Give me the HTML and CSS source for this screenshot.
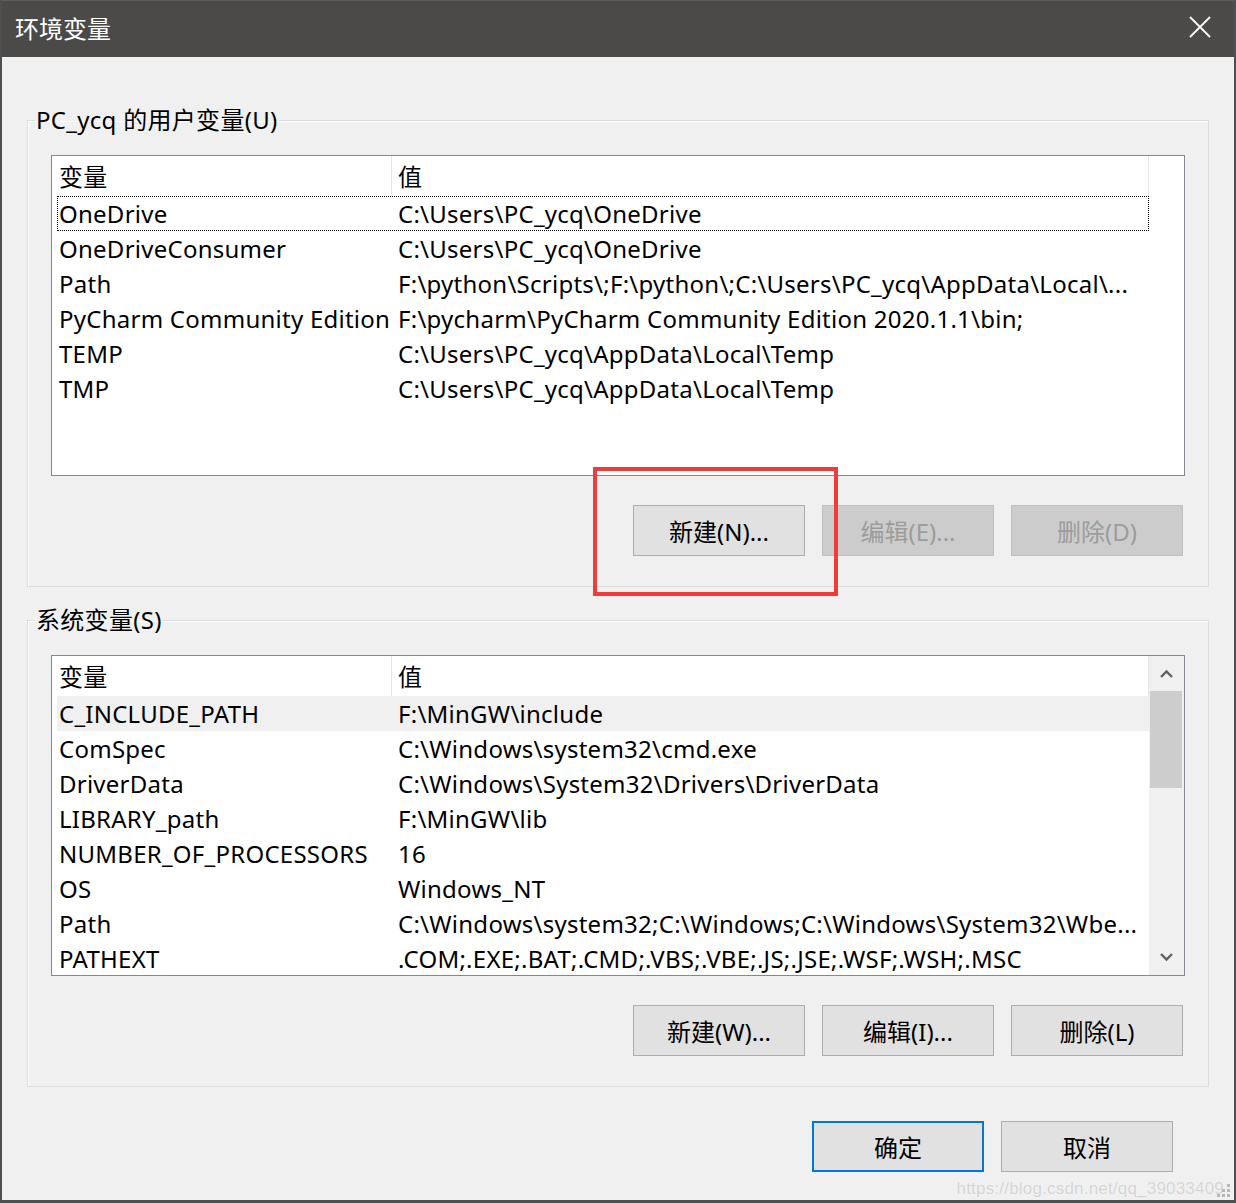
FILE: index.html
```html
<!DOCTYPE html>
<html lang="zh-CN">

<head>
	<meta charset="utf-8">
	<title>环境变量</title>
	<link rel="stylesheet" href="styles.css">
</head>

<body>
	<div class="window">
		<div class="titlebar">
			<span class="title">环境变量</span>
			<svg class="close" width="24" height="24" viewBox="0 0 24 24">
				<path d="M2 2 L22 22 M22 2 L2 22" stroke="#fff" stroke-width="1.8" fill="none"/>
			</svg>
		</div>

		<div class="content">
			<fieldset class="group">
				<legend>PC_ycq 的用户变量(U)</legend>
				<div class="list">
					<div class="list-main">
						<div class="list-head">
							<div class="head-name">变量</div>
							<div class="head-value">值</div>
						</div>
						<div class="row focus"><span class="name">OneDrive</span><span class="value">C:\Users\PC_ycq\OneDrive</span></div>
						<div class="row"><span class="name">OneDriveConsumer</span><span class="value">C:\Users\PC_ycq\OneDrive</span></div>
						<div class="row"><span class="name">Path</span><span class="value">F:\python\Scripts\;F:\python\;C:\Users\PC_ycq\AppData\Local\...</span></div>
						<div class="row"><span class="name">PyCharm Community Edition</span><span class="value">F:\pycharm\PyCharm Community Edition 2020.1.1\bin;</span></div>
						<div class="row"><span class="name">TEMP</span><span class="value">C:\Users\PC_ycq\AppData\Local\Temp</span></div>
						<div class="row"><span class="name">TMP</span><span class="value">C:\Users\PC_ycq\AppData\Local\Temp</span></div>
					</div>
				</div>
				<div class="buttons">
					<button class="btn">新建(N)...</button>
					<button class="btn" disabled>编辑(E)...</button>
					<button class="btn" disabled>删除(D)</button>
				</div>
				<div class="marker"></div>
			</fieldset>

			<fieldset class="group">
				<legend>系统变量(S)</legend>
				<div class="list">
					<div class="list-main">
						<div class="list-head">
							<div class="head-name">变量</div>
							<div class="head-value">值</div>
						</div>
						<div class="row selected"><span class="name">C_INCLUDE_PATH</span><span class="value">F:\MinGW\include</span></div>
						<div class="row"><span class="name">ComSpec</span><span class="value">C:\Windows\system32\cmd.exe</span></div>
						<div class="row"><span class="name">DriverData</span><span class="value">C:\Windows\System32\Drivers\DriverData</span></div>
						<div class="row"><span class="name">LIBRARY_path</span><span class="value">F:\MinGW\lib</span></div>
						<div class="row"><span class="name">NUMBER_OF_PROCESSORS</span><span class="value">16</span></div>
						<div class="row"><span class="name">OS</span><span class="value">Windows_NT</span></div>
						<div class="row"><span class="name">Path</span><span class="value">C:\Windows\system32;C:\Windows;C:\Windows\System32\Wbe...</span></div>
						<div class="row"><span class="name">PATHEXT</span><span class="value">.COM;.EXE;.BAT;.CMD;.VBS;.VBE;.JS;.JSE;.WSF;.WSH;.MSC</span></div>
					</div>
					<div class="scrollbar">
						<svg class="arrow" width="35" height="35" viewBox="0 0 35 35">
							<path d="M12 21 L17.5 15.5 L23 21" stroke="#606060" stroke-width="2.4" fill="none"/>
						</svg>
						<div class="thumb"></div>
						<div class="track"></div>
						<svg class="arrow" width="35" height="35" viewBox="0 0 35 35">
							<path d="M12 14 L17.5 19.5 L23 14" stroke="#606060" stroke-width="2.4" fill="none"/>
						</svg>
					</div>
				</div>
				<div class="buttons">
					<button class="btn">新建(W)...</button>
					<button class="btn">编辑(I)...</button>
					<button class="btn">删除(L)</button>
				</div>
			</fieldset>

			<div class="dialog-buttons">
				<button class="btn default">确定</button>
				<button class="btn">取消</button>
			</div>
		</div>

		<div class="watermark">https://blog.csdn.net/qq_39033409</div>
		<svg class="grip" width="16" height="16" viewBox="0 0 16 16">
			<rect x="11" y="1" width="3" height="3" fill="#b8b8b8"/>
			<rect x="6" y="6" width="3" height="3" fill="#b8b8b8"/>
			<rect x="11" y="6" width="3" height="3" fill="#b8b8b8"/>
			<rect x="1" y="11" width="3" height="3" fill="#b8b8b8"/>
			<rect x="6" y="11" width="3" height="3" fill="#b8b8b8"/>
			<rect x="11" y="11" width="3" height="3" fill="#b8b8b8"/>
		</svg>
	</div>
</body>

</html>
```

FILE: styles.css
```css
html, body {
	margin: 0;
	padding: 0;
}
body {
	background-color: #f0f0f0;
	font-family: "Noto Sans", "Noto Sans CJK SC", sans-serif;
	font-size: 24px;
	color: #000;
}
.window {
	position: relative;
	width: 1236px;
	height: 1203px;
	box-sizing: border-box;
	border: 2px solid #4f4f4f;
	border-top: 1px solid #5c5c5c;
	border-bottom: 3px solid #4f4f4f;
	background-color: #f0f0f0;
	overflow: hidden;
}
.titlebar {
	height: 56px;
	background-color: #4b4a48;
	display: flex;
	align-items: center;
	justify-content: space-between;
	padding: 0 22px 0 13px;
}
.title {
	color: #fff;
	font-size: 24px;
	margin-top: -4px;
}
.close {
	margin-top: -4px;
}
.content {
	padding: 0 25px;
}
.group {
	position: relative;
	margin: 48px 0 0 0;
	padding: 20px 23px 30px 23px;
	border: 1px solid #dcdcdc;
	box-shadow: inset 1px 1px 0 #fff;
}
.group + .group {
	margin-top: 18px;
}
legend {
	margin-left: -16px;
	padding: 0 1px;
	line-height: 30px;
	letter-spacing: 0.3px;
}
.list {
	display: flex;
	height: 319px;
	border: 1px solid #828790;
	background-color: #fff;
	overflow: hidden;
	letter-spacing: 0.25px;
}
.list-main {
	width: 1097px;
}
.list-head {
	display: flex;
	height: 40px;
	line-height: 42px;
}
.head-name {
	width: 332px;
	padding-left: 7px;
	border-right: 1px solid #e5e5e5;
}
.head-value {
	width: 750px;
	padding-left: 6px;
	border-right: 1px solid #e5e5e5;
}
.row {
	display: grid;
	grid-template-columns: 334px 1fr;
	box-sizing: border-box;
	height: 35px;
	line-height: 33px;
	margin-left: 5px;
	border: 1px solid transparent;
	white-space: nowrap;
}
.row.focus {
	border: 1px dotted #000;
}
.row.selected {
	background-color: #f0f0f0;
	border-color: #f0f0f0;
}
.name {
	padding-left: 1px;
	overflow: hidden;
}
.value {
	padding-left: 6px;
	overflow: hidden;
}
.scrollbar {
	width: 35px;
	display: flex;
	flex-direction: column;
	background-color: #f0f0f0;
}
.arrow {
	display: block;
	flex: none;
}
.thumb {
	height: 97px;
	margin: 0 2px 0 1px;
	background-color: #cdcdcd;
}
.track {
	flex: 1;
}
.buttons {
	display: flex;
	justify-content: flex-end;
	gap: 17px;
	margin-top: 29px;
	padding-right: 2px;
}
.btn {
	width: 172px;
	height: 51px;
	margin: 0;
	padding: 0;
	background-color: #e1e1e1;
	border: 1px solid #adadad;
	font-family: "Noto Sans", "Noto Sans CJK SC", sans-serif;
	font-size: 24px;
	color: #000;
}
.btn:disabled {
	background-color: #cccccc;
	border-color: #bfbfbf;
	color: #9c9c9c;
}
.btn.default {
	border: 2px solid #0078d7;
}
.dialog-buttons {
	display: flex;
	justify-content: flex-end;
	gap: 17px;
	margin-top: 34px;
	padding-right: 36px;
}
.marker {
	position: absolute;
	left: 565px;
	top: 332px;
	width: 237px;
	height: 121px;
	border: 4px solid #f03b3b;
}
.watermark {
	position: absolute;
	right: 10px;
	bottom: 1px;
	font-family: "Liberation Sans", sans-serif;
	font-size: 17px;
	color: #d4d4d4;
	text-shadow: 0 0 1px #fff;
	letter-spacing: 0.2px;
}
.grip {
	position: absolute;
	right: 2px;
	bottom: 1px;
}
```
